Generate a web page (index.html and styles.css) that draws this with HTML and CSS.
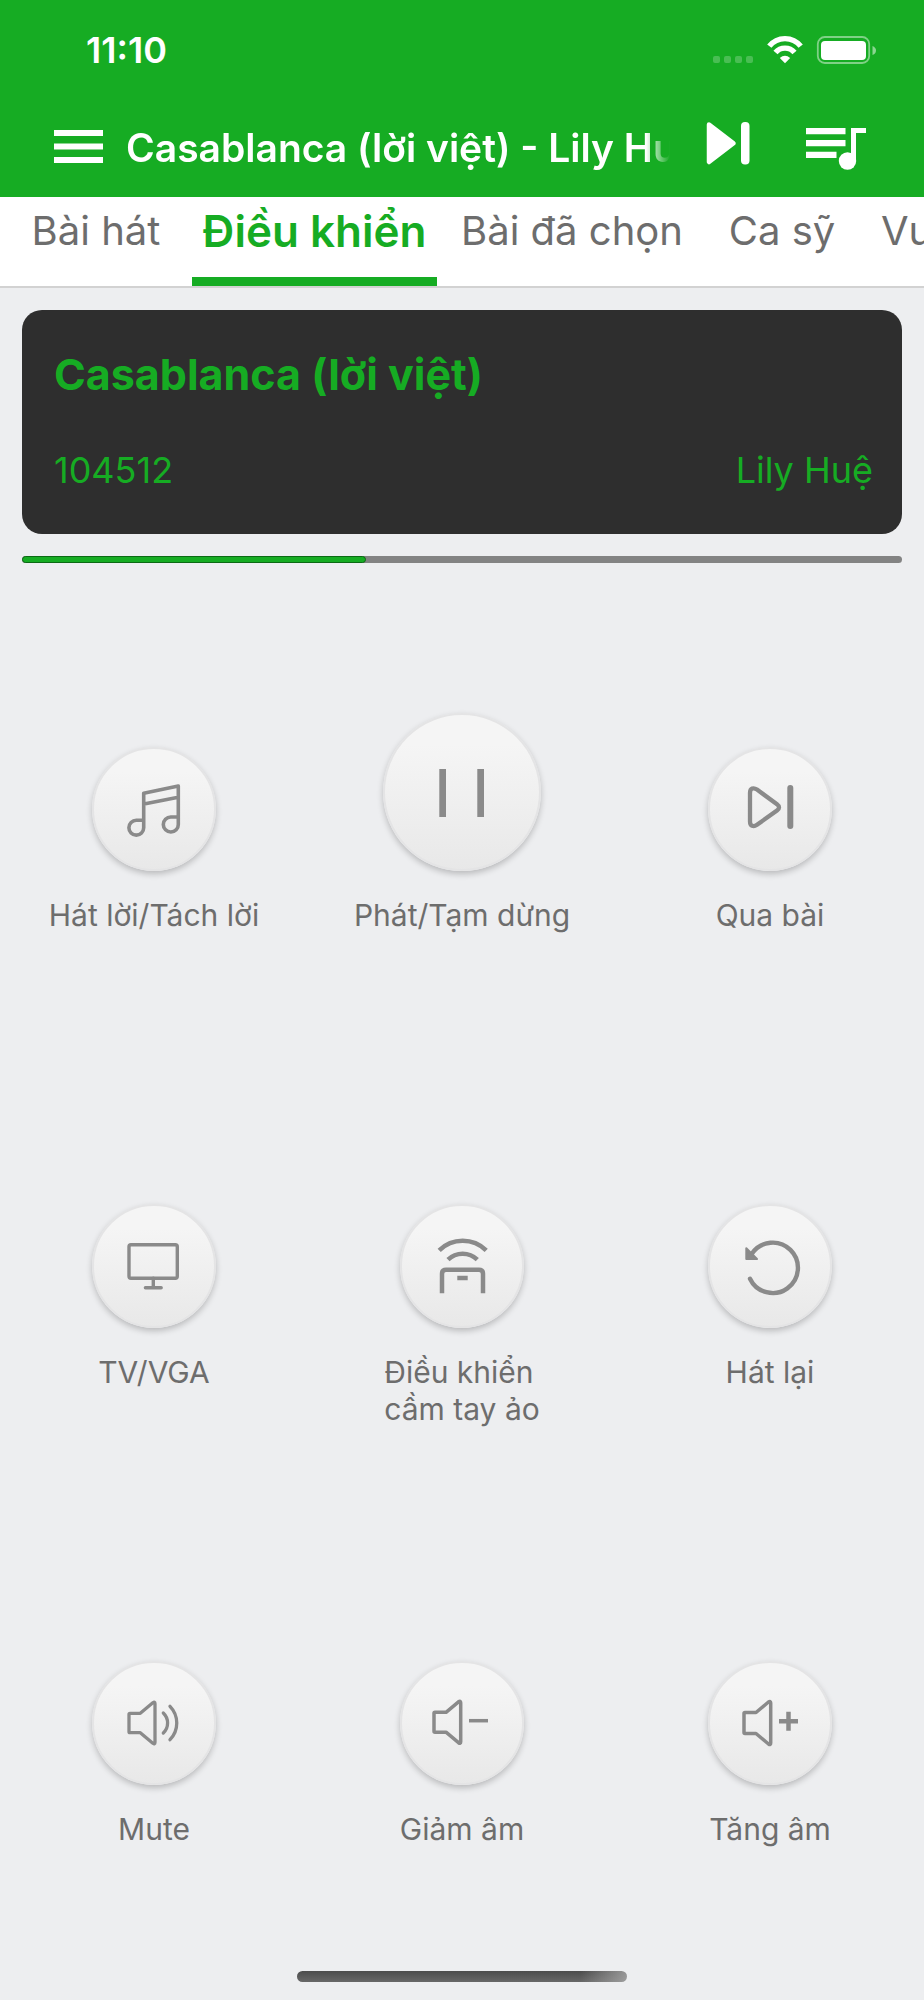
FILE: index.html
```html
<!DOCTYPE html>
<html lang="vi">
<head>
<meta charset="utf-8">
<meta name="viewport" content="width=device-width, initial-scale=1">
<title>Điều khiển</title>
<link rel="stylesheet" href="styles.css">
</head>
<body>
<div class="app">
  <header class="top">
    <div class="status">
      <span class="clock">11:10</span>
      <svg class="status-icons" width="164" height="32" viewBox="713 34 164 32" aria-hidden="true">
        <g fill="#fff" opacity=".22"><rect x="713" y="56" width="7" height="7" rx="2"/><rect x="724" y="56" width="7" height="7" rx="2"/><rect x="735" y="56" width="7" height="7" rx="2"/><rect x="746" y="56" width="7" height="7" rx="2"/></g>
        <g fill="none" stroke="#fff" stroke-width="5.4"><path d="M769.3 46.2a20 20 0 0 1 31.4 0"/><path d="M775.5 52.6a12.400 12.400 0 0 1 19 0"/></g>
        <path d="M785 63.300l-5.200-5.200q5.200-4.600 10.400 0z" fill="#fff"/>
        <rect x="817.800" y="37" width="51.400" height="26" rx="7" fill="none" stroke="#fff" stroke-width="1.800" opacity=".45"/>
        <rect x="821" y="41" width="45" height="19" rx="4" fill="#fff"/>
        <path d="M872.500 46q3.500 1.500 3.500 4.500t-3.500 4.500z" fill="#fff" opacity=".5"/>
      </svg>
    </div>
    <div class="bar">
      <button class="icon-btn" aria-label="Menu">
        <svg width="50" height="44" viewBox="54 127 50 44"><path d="M54 131h49v6H54zM54 144.500h49v6H54zM54 158h49v6H54z" fill="#fff"/></svg>
      </button>
      <h1 class="title">Casablanca (lời việt) - Lily Huệ</h1>
      <button class="icon-btn" aria-label="Qua bài">
        <svg width="44" height="44" viewBox="706 127 44 44" overflow="visible"><path d="M709 125.500L733.500 144.300 709 163z" fill="#fff" stroke="#fff" stroke-width="4.500" stroke-linejoin="round"/><rect x="741" y="123" width="8.500" height="42.500" rx="4" fill="#fff"/></svg>
      </button>
      <button class="icon-btn queue" aria-label="Danh sách phát">
        <svg width="60" height="46" viewBox="806 126 60 46"><path d="M806 129h39.500v6.300H806zM806 141h39.500v6.300H806zM806 152.700h30.500v6.300H806zM851 129h15v5h-10v28h-5z" fill="#fff"/><circle cx="847.500" cy="162" r="8.700" fill="#fff"/></svg>
      </button>
    </div>
  </header>

  <nav class="tabs">
    <a class="tab tab-song" href="#songs">Bài hát</a>
    <a class="tab tab-control active" href="#control" aria-current="page">Điều khiển</a>
    <a class="tab tab-queue" href="#selected">Bài đã chọn</a>
    <a class="tab tab-singer" href="#singers">Ca sỹ</a>
    <a class="tab tab-more" href="#more">Vu</a>
  </nav>

  <section class="now">
    <h2 class="song">Casablanca (lời việt)</h2>
    <div class="meta"><span>104512</span><span>Lily Huệ</span></div>
  </section>
  <div class="progress" role="progressbar" aria-label="Tiến độ" aria-valuenow="39" aria-valuemin="0" aria-valuemax="100"><div class="fill" style="width:39.1%"></div></div>

  <main class="controls">
    <button class="control">
      <span class="slot"><span class="disc"><svg class="glyph" viewBox="30 30 64 64" stroke-width="3.600"><path d="M51.700 73.300H44.300a7.400 7.400 0 1 0 7.400 7.400V46.300L86.300 39V77.400a7.500 7.500 0 1 1-7.500-7.400H86.300M52 57l34.300-6.800"/></svg></span></span>
      <span class="label">Hát lời/Tách lời</span>
    </button>
    <button class="control">
      <span class="slot"><span class="disc big"><svg class="glyph" viewBox="47 47 64 64"><path d="M56.300 56H63v48h-6.700zM94.300 56h6.700v48h-6.700z" fill="#8a8a8a" stroke="none"/></svg></span></span>
      <span class="label">Phát/Tạm dừng</span>
    </button>
    <button class="control">
      <span class="slot"><span class="disc"><svg class="glyph" viewBox="30 30 64 64" stroke-width="4.300"><path d="M42 46c0-4.800 3.500-5.800 7-3.400L69 57.300c2.700 2 2.700 4.200 0 6.200L49 77.800c-3.500 2.400-7 1.400-7-3.400Z"/><path d="M82.300 41V79" stroke-width="6"/></svg></span></span>
      <span class="label">Qua bài</span>
    </button>
    <button class="control">
      <span class="slot"><span class="disc"><svg class="glyph" viewBox="30 30 64 64" stroke-width="3.400"><rect x="37" y="40.700" width="48.300" height="33.600" rx="2"/><path d="M61.300 74.300v9.400M53.400 83.700h15.800"/></svg></span></span>
      <span class="label">TV/VGA</span>
    </button>
    <button class="control">
      <span class="slot"><span class="disc"><svg class="glyph flat" viewBox="30 30 64 64" stroke-width="4.500"><path d="M39.200 46.300a33.500 33.500 0 0 1 47 0M48 55.700a21 21 0 0 1 29.300 0M42 89.300V69.700q0-4 4-4h33q4 0 4 4v19.600M57.300 74h10.400"/></svg></span></span>
      <span class="label">Điều khiển<br>cầm tay ảo</span>
    </button>
    <button class="control">
      <span class="slot"><span class="disc"><svg class="glyph" viewBox="30 30 64 64" stroke-width="4.400"><path d="M42 74.700A25.200 25.200 0 1 0 44 49.500"/><path d="M38.300 44.300L49 55H38.300z" fill="#8a8a8a" stroke-width="2"/></svg></span></span>
      <span class="label">Hát lại</span>
    </button>
    <button class="control">
      <span class="slot"><span class="disc"><svg class="glyph" viewBox="30 30 64 64" stroke-width="3.300"><path d="M37 53.300q0-1 1-1H48.300L60.800 41.800q2.200-1.500 2.200 1V81.200q0 2.500-2.200 1L48.300 71.700H38q-1 0-1-1ZM71.300 52a13.800 13.800 0 0 1 0 20M78 45.300a24 24 0 0 1 0 33.400"/></svg></span></span>
      <span class="label">Mute</span>
    </button>
    <button class="control">
      <span class="slot"><span class="disc"><svg class="glyph" viewBox="33 31 64 64" stroke-width="3.500"><path d="M37 53.300q0-1 1-1H49L61.500 41.800q2.200-1.500 2.200 1V81.700q0 2.500-2.200 1L49 72.200H38q-1 0-1-1Z"/><path d="M72 60.700H91" stroke-linecap="butt"/></svg></span></span>
      <span class="label">Giảm âm</span>
    </button>
    <button class="control">
      <span class="slot"><span class="disc"><svg class="glyph" viewBox="31 30 64 64" stroke-width="3.500"><path d="M37 52.500q0-1 1-1H49L61.500 41q2.200-1.500 2.200 1V82q0 2.500-2.200 1L49 72.500H38q-1 0-1-1Z"/><path d="M72 60.300H91M81.500 50.800v19" stroke-linecap="butt" stroke-width="4.500"/></svg></span></span>
      <span class="label">Tăng âm</span>
    </button>
  </main>

  <footer class="home"><div class="home-bar"></div></footer>
</div>
</body>
</html>
```
FILE: styles.css
```css
* { box-sizing: border-box; }

body {
  margin: 0;
  background: #edeef0;
  color: #6d6d6d;
  font-family: Inter, "Noto Sans", sans-serif;
}

button {
  margin: 0;
  padding: 0;
  border: 0;
  background: none;
  color: inherit;
  font: inherit;
}

svg { display: block; }

.app {
  display: flex;
  flex-direction: column;
  min-height: 100vh;
  overflow: hidden;
}

.top {
  background: #16ac23;
  color: #fff;
}

.status {
  display: flex;
  align-items: center;
  justify-content: space-between;
  height: 100px;
  padding: 0 47px 0 86px;
}

.clock {
  font-size: 36px;
  font-weight: 600;
}

.bar {
  display: flex;
  align-items: center;
  height: 96px;
  margin-bottom: 1px;
  padding: 0 58px 0 54px;
}

.icon-btn { flex: none; }

.title {
  flex: 1;
  min-width: 0;
  margin: 0 36px 0 22px;
  overflow: hidden;
  font-size: 39px;
  font-weight: 600;
  line-height: 56px;
  white-space: nowrap;
  -webkit-mask-image: linear-gradient(to left, transparent, #000 24px);
  mask-image: linear-gradient(to left, transparent, #000 24px);
}

.queue { margin-left: 56px; }

.tabs {
  display: flex;
  height: 91px;
  overflow: hidden;
  background: #fff;
  border-bottom: 2px solid #d2d2d2;
}

.tab {
  flex: none;
  padding-top: 6px;
  border-bottom: 9px solid transparent;
  color: #6d6d6d;
  font-size: 40px;
  line-height: 56px;
  text-align: center;
  text-decoration: none;
  white-space: nowrap;
}

.tab.active {
  border-bottom-color: #16ac23;
  color: #16ac23;
  font-size: 44px;
  font-weight: 600;
}

.tab-song { width: 192px; }
.tab-control { width: 245px; }
.tab-queue { width: 270px; }
.tab-singer { width: 150px; }
.tab-more { padding-left: 24px; }

.now {
  margin: 22px 22px 0;
  padding: 36px 29px 36px 32px;
  border-radius: 20px;
  background: #2e2e2e;
  color: #16ac23;
}

.song {
  margin: 0;
  font-size: 43px;
  font-weight: 700;
  line-height: 56px;
}

.meta {
  display: flex;
  justify-content: space-between;
  margin-top: 40px;
  font-size: 36px;
  line-height: 56px;
}

.progress {
  height: 7px;
  margin: 22px 22px 0;
  border-radius: 4px;
  background: #838383;
}

.fill {
  height: 100%;
  border: 1px solid #0b6a14;
  border-radius: 4px;
  background: #16ac23;
}

.controls {
  display: grid;
  flex: 1;
  grid-template-columns: repeat(3, 1fr);
  grid-template-rows: repeat(3, 1fr);
}

.control {
  display: flex;
  flex-direction: column;
  align-items: center;
  padding-top: 150px;
}

.slot {
  display: flex;
  align-items: flex-end;
  height: 158px;
}

.disc {
  display: flex;
  align-items: center;
  justify-content: center;
  width: 124px;
  height: 124px;
  border: 2px solid #e4e4e5;
  border-radius: 50%;
  background: linear-gradient(#f5f5f5 20%, #e8e8e8);
  background-origin: border-box;
  box-shadow: 0 3px 6px rgba(0, 0, 0, .22);
}

.disc.big {
  width: 158px;
  height: 158px;
}

.glyph {
  width: 64px;
  height: 64px;
  fill: none;
  stroke: #8a8a8a;
  stroke-linecap: round;
  stroke-linejoin: round;
}

.glyph.flat { stroke-linecap: butt; }

.label {
  margin-top: 26px;
  font-size: 30px;
  line-height: 37px;
  text-align: left;
}

.home {
  display: flex;
  justify-content: center;
  padding: 37px 0 18px;
}

.home-bar {
  width: 330px;
  height: 11px;
  border-radius: 6px;
  background: linear-gradient(to right, transparent 86%, rgba(180, 180, 180, .7)), linear-gradient(#4c4c4c, #686868);
}
```
